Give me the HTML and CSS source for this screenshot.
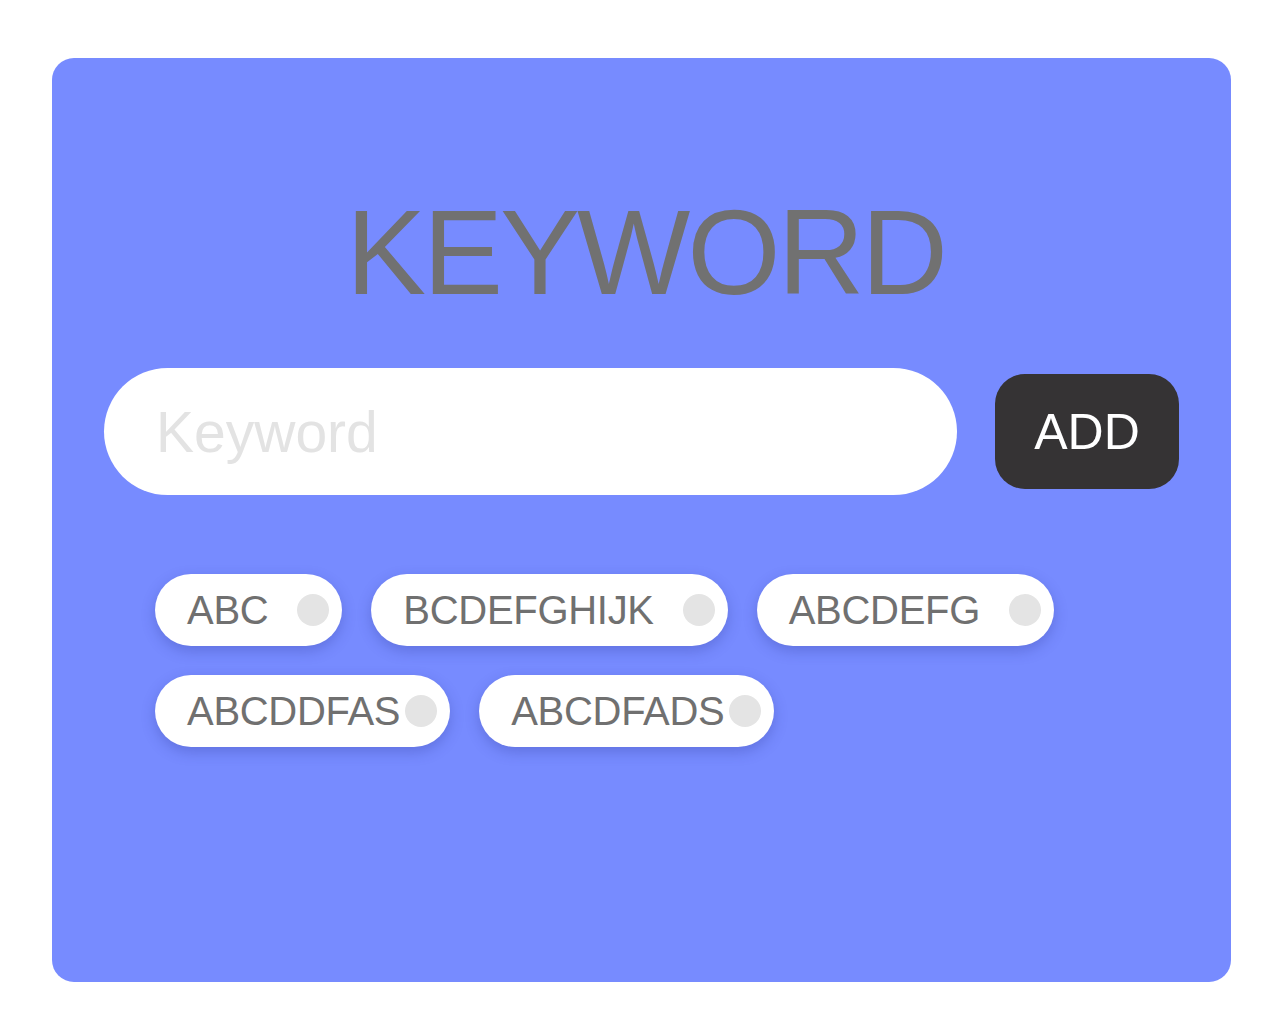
FILE: index.html
```html
<!DOCTYPE html>
<html lang="en">
<head>
<meta charset="utf-8">
<title>Keyword</title>
<link rel="stylesheet" href="styles.css">
</head>
<body>
<div class="card">
  <h1 class="title">KEYWORD</h1>
  <div class="entry">
    <input class="field" type="text" placeholder="Keyword">
    <button class="add">ADD</button>
  </div>
  <div class="tags">
    <div class="tag"><span class="tag-text">ABC</span><span class="dot"></span></div>
    <div class="tag"><span class="tag-text">BCDEFGHIJK</span><span class="dot"></span></div>
    <div class="tag"><span class="tag-text">ABCDEFG</span><span class="dot"></span></div>
    <div class="tag tag-long"><span class="tag-text">ABCDDFAS</span><span class="dot"></span></div>
    <div class="tag tag-long"><span class="tag-text">ABCDFADS</span><span class="dot"></span></div>
  </div>
</div>
</body>
</html>
```

FILE: styles.css
```css
* { box-sizing: border-box; }
html, body { margin: 0; padding: 0; background: #ffffff; }
body {
  font-family: "Liberation Sans", Arial, sans-serif;
  padding: 58px 47px 52px 52px;
}
.card {
  width: 1179px;
  height: 924px;
  background: #778bff;
  border-radius: 22px;
  padding: 134px 52px 0 52px;
}
.title {
  margin: 0;
  font-weight: 400;
  font-size: 120px;
  line-height: 120px;
  letter-spacing: -3px;
  color: #717171;
  text-align: center;
  padding-left: 8px;
}
.entry {
  margin-top: 56px;
  display: flex;
  align-items: center;
  gap: 38px;
}
.field {
  flex: 1;
  height: 127px;
  border: none;
  outline: none;
  border-radius: 64px;
  background: #ffffff;
  padding: 0 0 0 52px;
  font-family: "Liberation Sans", Arial, sans-serif;
  font-size: 57px;
  color: #707070;
}
.field::placeholder { color: #e3e3e3; }
.add {
  width: 184px;
  height: 115px;
  border: none;
  border-radius: 30px;
  background: #353334;
  color: #ffffff;
  font-family: "Liberation Sans", Arial, sans-serif;
  font-size: 50px;
  padding: 0;
}
.tags {
  margin-top: 79px;
  padding-left: 51px;
  display: flex;
  flex-wrap: wrap;
  column-gap: 29px;
  row-gap: 29px;
  width: 960px;
}
.tag {
  height: 72px;
  border-radius: 36px;
  background: #ffffff;
  box-shadow: 0 5px 14px rgba(40, 50, 140, 0.28);
  display: flex;
  align-items: center;
  padding: 0 13px 0 32px;
}
.tag-text {
  padding-right: 29px;
  white-space: nowrap;
  font-size: 40px;
  letter-spacing: -0.3px;
  color: #707070;
  line-height: 1;
}
.tag-long .tag-text { padding-right: 5px; }
.dot {
  flex: none;
  width: 32px;
  height: 32px;
  border-radius: 50%;
  background: #e4e4e4;
}
```
